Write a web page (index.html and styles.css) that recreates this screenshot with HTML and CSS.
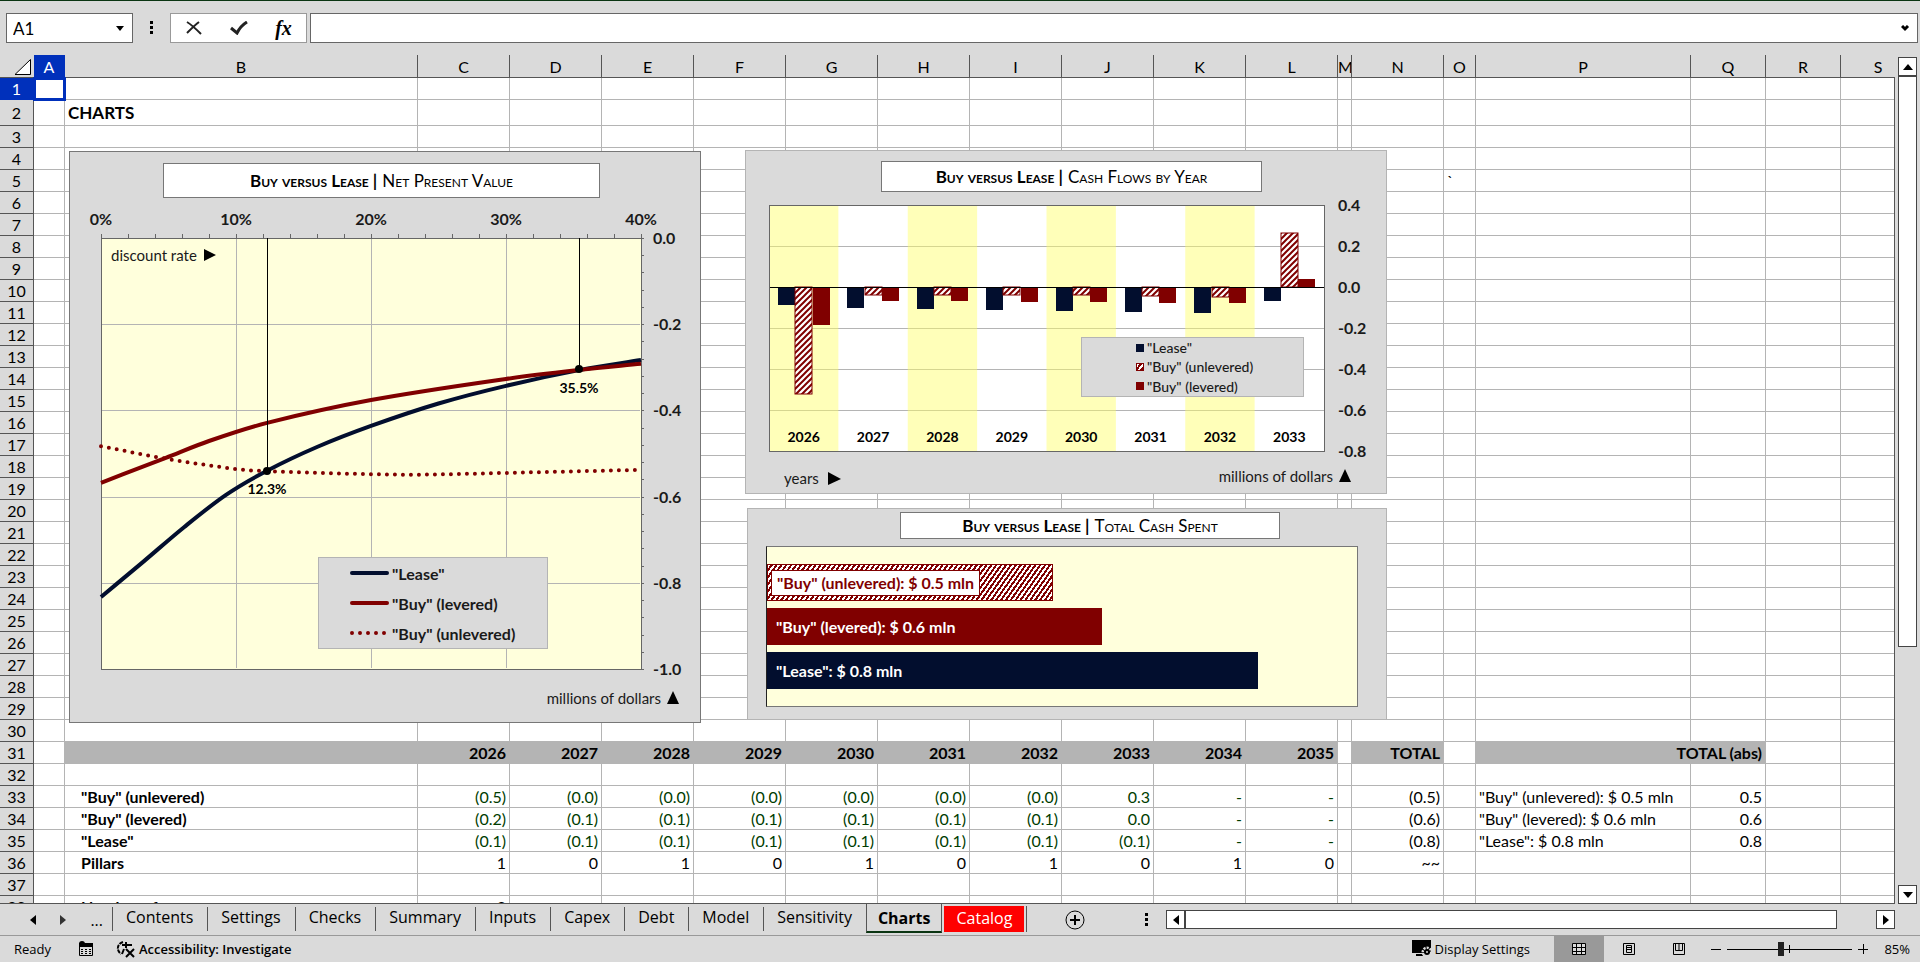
FILE: index.html
```html
<!DOCTYPE html>
<html lang="en">
<head>
  <meta charset="UTF-8">
  <title>Buy versus Lease - Charts</title>
  <link rel="stylesheet" href="styles.css">
</head>
<body>
  <header class="formula-bar">
    <div class="name-box">
      <input type="text" value="A1" aria-label="Name box">
      <button aria-label="Named ranges"><svg width="8" height="5"><path d="M0 0h8L4 5z"/></svg></button>
    </div>
    <svg class="dots" width="4" height="14"><path d="M0 0h3v3H0zM0 5h3v3H0zM0 10h3v3H0z"/></svg>
    <div class="fx-buttons">
      <button aria-label="Cancel"><svg width="16" height="14" fill="none" stroke="#222" stroke-width="2"><path d="M1 1c5 3 9 7 14 12"/><path d="M13 1C9 4 5 8 1 12"/></svg></button>
      <button aria-label="Enter"><svg width="18" height="14" fill="none" stroke="#222" stroke-width="3"><path d="M1 7l6 5C9 8 12 4 17 1"/></svg></button>
      <button class="fx" aria-label="Insert function">fx</button>
    </div>
    <div class="formula">
      <input type="text" aria-label="Formula">
      <button aria-label="Expand"><svg width="9" height="7" fill="none" stroke="#000" stroke-width="3"><path d="M1 1l3 3 3-3"/></svg></button>
    </div>
  </header>

  <main class="workspace">
    <div class="sheet">
      <table id="grid"></table>

      <section class="chart npv">
        <h2><b>Buy versus Lease |</b> Net Present Value</h2>
        <svg id="npv" width="630" height="522" viewBox="-31 -38 630 522">
          <rect class="plot" width="540" height="431"/>
          <g id="npv-grid"></g>
          <g id="npv-lines"></g>
          <path class="drop" d="M166 0V233M478 0V131"/>
          <circle cx="166" cy="233" r="4"/>
          <circle cx="478" cy="131" r="4"/>
          <text class="note" x="478" y="155">35.5%</text>
          <text class="note" x="166" y="256">12.3%</text>
          <text class="unit" x="10" y="23">discount rate</text>
          <path d="M103 11v12l12-6z"/>
          <text class="unit end" x="560" y="466">millions of dollars</text>
          <path d="M566 466h12l-6-13z"/>
        </svg>
        <ul class="legend">
          <li><svg width="39" height="4"><path class="lease" d="M2 2h35"/></svg>"Lease"</li>
          <li><svg width="39" height="4"><path class="levered" d="M2 2h35"/></svg>"Buy" (levered)</li>
          <li><svg width="39" height="4"><path class="unlevered" d="M2 2h35"/></svg>"Buy" (unlevered)</li>
        </ul>
      </section>

      <section class="chart flows">
        <h2><b>Buy versus Lease |</b> Cash Flows by Year</h2>
        <svg id="flows" width="640" height="301" viewBox="-23 -13 640 301">
          <defs>
            <pattern id="hatch" width="6" height="6" patternUnits="userSpaceOnUse">
              <rect width="6" height="6" fill="#fff"/>
              <path d="M-1 7L7 -1M-4 4L4 -4M2 10L10 2" stroke="#800000" stroke-width="2"/>
            </pattern>
          </defs>
          <rect width="555" height="246" fill="#fff"/>
          <g id="flows-grid"></g>
          <g id="flows-bars"></g>
          <path class="zero" d="M0 82H555"/>
          <rect class="frame" width="555" height="246"/>
          <text class="unit" x="15" y="279">years</text>
          <path d="M59 267v13l13-6z"/>
          <text class="unit end" x="564" y="277">millions of dollars</text>
          <path d="M570 277h12l-6-13z"/>
        </svg>
        <ul class="legend">
          <li><i class="key lease"></i>"Lease"</li>
          <li><i class="key hatch"></i>"Buy" (unlevered)</li>
          <li><i class="key levered"></i>"Buy" (levered)</li>
        </ul>
      </section>

      <section class="chart total">
        <h2><b>Buy versus Lease |</b> Total Cash Spent</h2>
        <div class="bars">
          <div class="bar hatch" style="width: 48.4%"><span>"Buy" (unlevered): $ 0.5 mln</span></div>
          <div class="bar levered" style="width: 56.8%">"Buy" (levered): $ 0.6 mln</div>
          <div class="bar lease" style="width: 83.2%">"Lease": $ 0.8 mln</div>
        </div>
      </section>
    </div>

    <div class="vscroll">
      <button aria-label="Scroll up"><svg width="10" height="6"><path d="M5 0l5 6H0z"/></svg></button>
      <div class="thumb"></div>
      <button class="last" aria-label="Scroll down"><svg width="10" height="6"><path d="M0 0h10L5 6z"/></svg></button>
    </div>
  </main>

  <nav class="tab-bar">
    <div class="tab-nav">
      <button aria-label="Previous sheet"><svg width="6" height="10"><path d="M6 0v10L0 5z"/></svg></button>
      <button aria-label="Next sheet"><svg width="6" height="10"><path d="M0 0v10l6-5z" fill="#333"/></svg></button>
      <button>...</button>
    </div>
    <div class="tabs">
      <button>Contents</button>
      <button>Settings</button>
      <button>Checks</button>
      <button>Summary</button>
      <button>Inputs</button>
      <button>Capex</button>
      <button>Debt</button>
      <button>Model</button>
      <button>Sensitivity</button>
      <button class="active">Charts</button>
      <button class="red"><span>Catalog</span></button>
    </div>
    <button class="add" aria-label="New sheet"><svg width="20" height="20" fill="none" stroke="#000"><circle cx="10" cy="10" r="9"/><path d="M10 5v10M5 10h10" stroke-width="2"/></svg></button>
    <div class="hscroll">
      <svg class="dots" width="4" height="14"><path d="M0 0h3v3H0zM0 5h3v3H0zM0 10h3v3H0z"/></svg>
      <button aria-label="Scroll left"><svg width="6" height="10"><path d="M6 0v10L0 5z"/></svg></button>
      <div class="thumb"></div>
      <button class="last" aria-label="Scroll right"><svg width="6" height="10"><path d="M0 0v10l6-5z"/></svg></button>
    </div>
  </nav>

  <footer class="status-bar">
    <span class="ready">Ready</span>
    <svg class="macro" width="16" height="16"><path d="M1.500 4.500h13v10h-13z" fill="none" stroke="#000"/><path d="M1 2h14v4H1z"/><circle cx="4" cy="3" r="3"/><path d="M3 8.500h2M7 8.500h2M11 8.500h2M3 10.500h2M7 10.500h2M11 10.500h2M3 12.500h2M7 12.500h2M11 12.500h2" stroke="#000"/></svg>
    <button class="access"><svg width="20" height="18" fill="none" stroke="#000" stroke-width="2"><path d="M7 2C1 4 0 10 5 14" stroke-dasharray="4 1"/><path d="M6 5h10M10 2v6M8 9l-2 5" /><path d="M10 9l8 8M18 9l-8 8"/></svg>Accessibility: Investigate</button>
    <button class="display"><svg width="22" height="18"><path d="M0 0h19v13H0zM4 14h7v2H4z"/><circle cx="15" cy="12" r="4" fill="none" stroke="#dadada" stroke-width="3" stroke-dasharray="2 1"/><circle cx="15" cy="12" r="3"/><circle cx="15" cy="12" r="1" fill="#dadada"/></svg>Display Settings</button>
    <button class="view on" aria-label="Normal view"><svg width="14" height="12" fill="#dadada" stroke="#000"><path d="M.5.5h13v11H.5zM4.500 0v12M9.500 0v12M0 4.500h14M0 8.500h14"/></svg></button>
    <button class="view" aria-label="Page layout"><svg width="12" height="12" fill="none" stroke="#000"><path d="M.5.5h11v11H.5zM3.500 2.500h5v7h-5zM4 4.500h4M4 6.500h4"/></svg></button>
    <button class="view" aria-label="Page break preview"><svg width="12" height="12" fill="none" stroke="#000"><path d="M.5.5h11v11H.5zM2.500 0v7.500h7V0M6 0v7"/></svg></button>
    <div class="zoom">
      <button aria-label="Zoom out"><svg width="10" height="10" stroke="#000"><path d="M0 5.500h10"/></svg></button>
      <input type="range" min="10" max="160" value="74" aria-label="Zoom">
      <button aria-label="Zoom in"><svg width="10" height="10" stroke="#000"><path d="M0 5.500h10M5.500 0v10"/></svg></button>
      <span>85%</span>
    </div>
  </footer>

  <script src="script.js"></script>
</body>
</html>
```
FILE: styles.css
```css
* {
  box-sizing: border-box;
}

body {
  margin: 0;
  height: 100vh;
  display: flex;
  flex-direction: column;
  overflow: hidden;
  background: #dadada;
  border-top: 1px solid #0a3512;
  color: #000;
  font-family: "Open Sans", sans-serif;
  font-size: 16px;
}

button {
  display: flex;
  align-items: center;
  justify-content: center;
  padding: 0;
  border: none;
  background: none;
  color: inherit;
  font: inherit;
}

svg {
  display: block;
  flex: none;
}

/* formula bar */
.formula-bar {
  display: flex;
  align-items: center;
  height: 54px;
  padding: 0 2px 0 6px;
}

.name-box,
.fx-buttons,
.formula {
  display: flex;
  height: 30px;
  background: #fff;
  border: 1px solid #666;
}

.name-box {
  width: 127px;
}

.name-box input,
.formula input {
  flex: 1;
  min-width: 0;
  border: none;
  outline: none;
  background: none;
  padding: 0 6px;
  font: 17px Lato, sans-serif;
}

.name-box button,
.formula button {
  width: 24px;
}

.formula-bar .dots {
  margin: 0 16px 0 17px;
}

.fx-buttons {
  width: 137px;
  border-color: #999;
}

.fx-buttons button {
  width: 45px;
}

.fx-buttons .fx {
  font: italic bold 20px "Liberation Serif", serif;
}

.formula {
  flex: 1;
  margin-left: 3px;
}

/* grid */
.workspace {
  flex: 1;
  display: flex;
  min-height: 0;
}

.sheet {
  position: relative;
  flex: 1;
  overflow: hidden;
  border-bottom: 1px solid #555;
}

.sheet::after {
  content: "";
  position: absolute;
  top: 22px;
  right: 0;
  bottom: 0;
  border-right: 1px solid #555;
}

table {
  table-layout: fixed;
  width: 1916px;
  border-collapse: separate;
  border-spacing: 0;
  font: 16px/20px Lato, sans-serif;
}

th,
td {
  height: 22px;
  padding: 1px 3px 0;
  border-right: 1px solid #b4b4b4;
  border-bottom: 1px solid #b4b4b4;
  overflow: hidden;
  white-space: nowrap;
}

td {
  background: #fff;
  text-align: right;
}

th {
  padding: 1px 0 0;
  background: #dadada;
  border-color: #555;
  font-weight: normal;
  text-align: center;
}

thead th {
  height: 23px;
}

thead th:first-child {
  border-right: none;
}

thead th svg {
  margin-left: 14px;
}

th.selected {
  background: #0030bb;
  border-color: #0030bb;
  color: #fff;
}

.tall td,
.tall th {
  height: 26px;
}

td.text {
  text-align: left;
}

td.title {
  text-align: left;
  font-weight: bold;
  font-size: 17px;
}

td.label {
  padding-left: 16px;
  text-align: left;
  font-weight: bold;
}

td.green {
  color: #003c00;
}

td.band {
  background: #b4b4b4;
  font-weight: bold;
}

.cursor {
  position: absolute;
  top: 22px;
  left: 33px;
  width: 33px;
  height: 24px;
  border: 3px solid #0030bb;
}

/* charts float over the cells */
.chart {
  position: absolute;
  background: #dadada;
  border: 1px solid #b4b4b4;
  font-family: Lato, sans-serif;
}

.chart h2 {
  display: flex;
  align-items: center;
  justify-content: center;
  gap: 5px;
  margin: 0;
  background: #fff;
  border: 1px solid #777;
  font-size: 17px;
  font-weight: normal;
  font-variant: small-caps;
}

.npv {
  top: 96px;
  left: 69px;
  border-color: #777;
}

.npv h2 {
  width: 437px;
  height: 35px;
  margin: 11px 0 2px 93px;
}

.flows {
  top: 95px;
  left: 745px;
}

.flows h2 {
  width: 381px;
  height: 31px;
  margin: 10px 0 0 135px;
}

.total {
  top: 453px;
  left: 747px;
  width: 640px;
}

.total h2 {
  width: 380px;
  height: 27px;
  margin: 3px 0 0 152px;
}

.chart .plot {
  fill: #ffffdc;
  stroke: #666;
  shape-rendering: crispEdges;
}

.grid-line,
.tick,
.zero,
.drop,
.frame {
  fill: none;
  stroke: #b4b4b4;
  shape-rendering: crispEdges;
}

.tick,
.frame {
  stroke: #666;
}

.zero,
.drop {
  stroke: #000;
}

.pillar {
  fill: #ffff64;
  fill-opacity: 0.45;
}

path.lease,
path.levered,
path.unlevered {
  fill: none;
  stroke: #020e2e;
  stroke-width: 4;
}

.legend path {
  stroke-linecap: round;
}

path.levered {
  stroke: #800000;
}

path.unlevered {
  stroke: #800000;
  stroke-dasharray: 0 8;
  stroke-linecap: round;
}

rect.lease {
  fill: #020e2e;
}

rect.levered {
  fill: #800000;
}

rect.hatched {
  fill: url(#hatch);
  stroke: #800000;
}

.chart text {
  font-size: 16px;
  font-weight: bold;
  fill: #1a1a1a;
}

.chart .center,
.chart .note {
  text-anchor: middle;
}

.chart .note {
  font-size: 14px;
  fill: #000;
}

.chart .unit {
  font-size: 15px;
  font-weight: normal;
}

.chart .end {
  text-anchor: end;
}

.legend {
  position: absolute;
  display: flex;
  flex-direction: column;
  justify-content: space-around;
  margin: 0;
  padding: 0;
  list-style: none;
  background: #dadada;
  border: 1px solid #b4b4b4;
  color: #1a1a1a;
}

.legend li {
  display: flex;
  align-items: center;
  gap: 3px;
}

.npv .legend {
  top: 405px;
  left: 248px;
  width: 230px;
  height: 92px;
  padding-left: 31px;
  font-size: 16px;
  font-weight: bold;
}

.flows .legend {
  top: 186px;
  left: 335px;
  width: 223px;
  height: 60px;
  padding-left: 54px;
  font-size: 14px;
  font-weight: 500;
}

.key {
  width: 8px;
  height: 8px;
}

.key.lease,
.bar.lease {
  background: #020e2e;
}

.key.levered,
.bar.levered {
  background: #800000;
}

.hatch {
  background: repeating-linear-gradient(125deg, #fff 0 2px, #800000 2px 4px);
  border: 1px solid #800000;
}

.bars {
  display: flex;
  flex-direction: column;
  justify-content: center;
  gap: 7px;
  height: 161px;
  margin: 7px 28px 12px 18px;
  background: #ffffdc;
  border: 1px solid #777;
  border-left-color: #222;
}

.bar {
  display: flex;
  align-items: center;
  height: 37px;
  padding-left: 9px;
  color: #fff;
  font-size: 16px;
  font-weight: bold;
}

.bar.hatch {
  padding-left: 3px;
}

.bar span {
  padding: 0 5px;
  background: #fff;
  border: 1px solid #800000;
  color: #800000;
  line-height: 24px;
}

/* scroll bars */
.vscroll {
  display: flex;
  flex-direction: column;
  width: 25px;
  padding: 2px 3px 0;
}

.vscroll button,
.hscroll button,
.thumb {
  background: #fff;
  border: 1px solid #444;
}

.vscroll button {
  height: 19px;
}

.vscroll .thumb {
  height: 571px;
}

.vscroll .last {
  margin-top: auto;
}

.hscroll {
  flex: 1;
  display: flex;
  align-items: center;
  margin-left: 60px;
  padding-right: 25px;
}

.hscroll .dots {
  margin-right: 17px;
}

.hscroll button {
  width: 19px;
  height: 19px;
}

.hscroll .thumb {
  flex: 1;
  height: 19px;
  margin-right: 39px;
}

.hscroll .last {
  flex: none;
}

/* sheet tabs */
.tab-bar {
  display: flex;
  align-items: center;
  height: 32px;
  border-bottom: 1px solid #999;
}

.tab-nav {
  display: flex;
  justify-content: flex-end;
  gap: 24px;
  width: 112px;
  padding-right: 9px;
}

.tabs {
  display: flex;
  align-self: stretch;
}

.tabs button {
  height: 24px;
  margin-top: 3px;
  padding: 0 14px 4px 13px;
  border-left: 1px solid #555;
}

.tabs .active {
  height: 29px;
  margin-top: 0;
  padding: 0 11px;
  border-right: 1px solid #555;
  border-bottom: 2px solid #0a3512;
  font-weight: bold;
}

.tabs .red {
  height: 26px;
  margin-top: 2px;
  padding: 0 2px;
  border-left: none;
  border-right: 1px solid #555;
}

.red span {
  padding: 0 12px 2px;
  background: #f00;
  color: #fff;
  line-height: 24px;
}

.add {
  margin-left: 38px;
}

/* status bar */
.status-bar {
  display: flex;
  align-items: center;
  height: 26px;
  padding: 0 10px 0 14px;
  font-size: 13px;
}

.macro {
  margin: 0 22px 0 27px;
}

.access {
  gap: 3px;
  font-weight: 600;
}

.display {
  gap: 1px;
  margin-left: auto;
  margin-right: 24px;
}

.view {
  width: 50px;
  height: 26px;
}

.view.on {
  background: #999;
}

.zoom {
  display: flex;
  align-items: center;
  gap: 6px;
  margin-left: 7px;
}

.zoom span {
  width: 36px;
  text-align: right;
}

.zoom input {
  appearance: none;
  width: 125px;
  height: 14px;
  margin: 0;
  background: linear-gradient(#000, #000) 62px 50% / 1px 8px no-repeat, linear-gradient(#000, #000) 0 50% / 100% 1px no-repeat;
}

.zoom input::-webkit-slider-thumb {
  appearance: none;
  width: 6px;
  height: 14px;
  background: #222;
}
```
FILE: script.js
```js
const columns = {
  A: 31, B: 353, C: 92, D: 92, E: 92, F: 92, G: 92, H: 92, I: 92, J: 92, K: 92, L: 92,
  M: 14, N: 92, O: 32, P: 215, Q: 75, R: 75, S: 75
};
const names = Object.keys(columns);
const yearCols = "CDEFGHIJKL".split("");

// cell address -> [text, class]
const cells = {
  B2: ["CHARTS", "title"],
  O5: ["`", "text"],
  N31: ["TOTAL", "band"],
  Q31: ["TOTAL (abs)", "band"],
  B31: ["", "band"],
  B33: ['"Buy" (unlevered)', "label"],
  B34: ['"Buy" (levered)', "label"],
  B35: ['"Lease"', "label"],
  B36: ["Pillars", "label"],
  B38: ["Number of", "label"],
  C38: ["2", ""],
  N33: ["(0.5)", ""],
  N34: ["(0.6)", ""],
  N35: ["(0.8)", ""],
  N36: ["~~", ""],
  P33: ['"Buy" (unlevered): $ 0.5 mln', "text"],
  P34: ['"Buy" (levered): $ 0.6 mln', "text"],
  P35: ['"Lease": $ 0.8 mln', "text"],
  Q33: ["0.5", ""],
  Q34: ["0.6", ""],
  Q35: ["0.8", ""]
};

function fillYears(row, values, cls) {
  yearCols.forEach((c, i) => cells[c + row] = [values[i], cls]);
}

fillYears(31, ["2026", "2027", "2028", "2029", "2030", "2031", "2032", "2033", "2034", "2035"], "band");
fillYears(33, ["(0.5)", "(0.0)", "(0.0)", "(0.0)", "(0.0)", "(0.0)", "(0.0)", "0.3", "-", "-"], "green");
fillYears(34, ["(0.2)", "(0.1)", "(0.1)", "(0.1)", "(0.1)", "(0.1)", "(0.1)", "0.0", "-", "-"], "green");
fillYears(35, ["(0.1)", "(0.1)", "(0.1)", "(0.1)", "(0.1)", "(0.1)", "(0.1)", "(0.1)", "-", "-"], "green");
fillYears(36, ["1", "0", "1", "0", "1", "0", "1", "0", "1", "0"], "");

function drawGrid() {
  let html = '<colgroup><col style="width: 34px">';
  names.forEach(n => html += `<col style="width: ${columns[n]}px">`);
  html += '</colgroup><thead><tr><th><svg width="17" height="16"><path d="M16.5.5v15H1z" fill="#fff" stroke="#000"/></svg></th>';
  names.forEach(n => html += `<th${n === "A" ? ' class="selected"' : ""}>${n}</th>`);
  html += "</tr></thead><tbody>";

  for (let r = 1; r <= 38; r++) {
    html += `<tr${r === 2 ? ' class="tall"' : ""}><th${r === 1 ? ' class="selected"' : ""}>${r}</th>`;
    for (const n of names) {
      // TOTAL (abs) runs over P and Q
      if (n + r === "P31") continue;
      const [text, cls] = cells[n + r] || ["", ""];
      const span = n + r === "Q31" ? ' colspan="2"' : "";
      html += `<td${cls ? ` class="${cls}"` : ""}${span}>${text}</td>`;
    }
    html += "</tr>";
  }
  document.getElementById("grid").innerHTML = html + "</tbody>";
  const cursor = document.createElement("div");
  cursor.className = "cursor";
  document.querySelector(".sheet").append(cursor);
}

// smoothed line through [rate %, value] points
function smooth(points) {
  const p = points.map(([rate, v]) => [rate * 13.5, -v * 431]);
  let d = `M${p[0]}`;
  for (let i = 0; i < p.length - 1; i++) {
    const a = p[i - 1] || p[i], b = p[i], c = p[i + 1], e = p[i + 2] || c;
    const t = (c[0] - b[0]) / 3;
    const s1 = (c[1] - a[1]) / (c[0] - a[0]);
    const s2 = (e[1] - b[1]) / (e[0] - b[0]);
    d += `C${b[0] + t} ${b[1] + s1 * t} ${c[0] - t} ${c[1] - s2 * t} ${c[0]} ${c[1]}`;
  }
  return d;
}

function drawNpv() {
  let grid = "";
  for (let i = 0; i <= 20; i++) grid += `<path class="tick" d="M${i * 27} 0v-4"/>`;
  for (let i = 0; i <= 25; i++) grid += `<path class="tick" d="M540 ${Math.round(i * 17.24)}h3"/>`;
  for (let i = 0; i <= 4; i++) {
    if (i > 0 && i < 4) grid += `<path class="grid-line" d="M${i * 135} 1V430"/>`;
    grid += `<text class="center" x="${i * 135}" y="-13">${i * 10}%</text>`;
  }
  for (let i = 0; i <= 5; i++) {
    const y = Math.round(i * 86.2);
    if (i > 0 && i < 5) grid += `<path class="grid-line" d="M1 ${y}H539"/>`;
    grid += `<text x="552" y="${y + 6}">${(-i / 5).toFixed(1).replace("-0.0", "0.0")}</text>`;
  }
  document.getElementById("npv-grid").innerHTML = grid;

  const series = {
    lease: [[0, -.833], [3.1, -.752], [6.15, -.671], [9.26, -.596], [12.3, -.54], [16, -.485], [20, -.436], [25, -.384], [30, -.343], [35.5, -.306], [40, -.283]],
    levered: [[0, -.568], [4.8, -.51], [8, -.471], [12.3, -.429], [20, -.376], [30, -.327], [35.5, -.306], [40, -.292]],
    unlevered: [[0, -.483], [4.8, -.512], [10, -.536], [12.3, -.541], [20, -.548], [24, -.549], [30, -.545], [40, -.538]]
  };
  document.getElementById("npv-lines").innerHTML =
    Object.keys(series).map(s => `<path class="${s}" d="${smooth(series[s])}"/>`).join("");
}

function drawFlows() {
  const lease = [-.09, -.1, -.105, -.11, -.115, -.124, -.129, -.066];
  const unlevered = [-.524, -.037, -.037, -.041, -.041, -.046, -.051, .263];
  const levered = [-.184, -.066, -.066, -.071, -.071, -.076, -.08, .037];
  const step = 555 / 8;
  let grid = "", bars = "";

  for (let i = 0; i <= 6; i++) {
    if (i > 0 && i < 6) grid += `<path class="grid-line" d="M0 ${i * 41}H555"/>`;
    grid += `<text x="569" y="${i * 41 + 6}">${(.4 - i / 5).toFixed(1).replace("-0.0", "0.0")}</text>`;
  }
  for (let i = 0; i < 8; i++) {
    const x = i * step;
    if (i % 2 === 0) grid += `<rect class="pillar" x="${x}" width="${step}" height="246"/>`;
    grid += `<text class="note" x="${x + step / 2}" y="237">${2026 + i}</text>`;
    [["lease", lease], ["hatched", unlevered], ["levered", levered]].forEach(([cls, data], k) => {
      const h = Math.abs(data[i]) * 205;
      const y = data[i] > 0 ? 82 - h : 82;
      bars += `<rect class="${cls}" x="${Math.round(x + 9 + k * 17.3)}" y="${Math.round(y)}" width="17" height="${Math.round(h)}"/>`;
    });
  }
  document.getElementById("flows-grid").innerHTML = grid;
  document.getElementById("flows-bars").innerHTML = bars;
}

drawGrid();
drawNpv();
drawFlows();
```
